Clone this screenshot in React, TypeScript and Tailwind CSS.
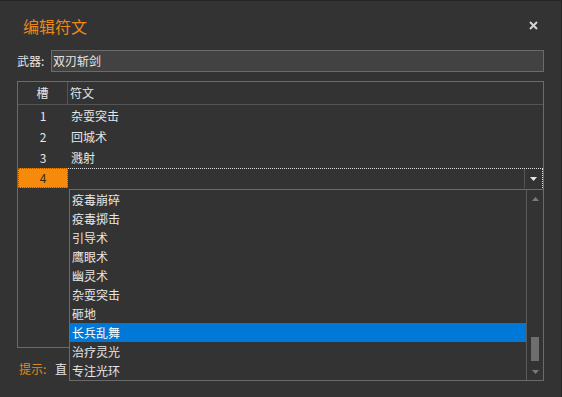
export default function App() {
    const rows = [
        { slot: '1', rune: '杂耍突击' },
        { slot: '2', rune: '回城术' },
        { slot: '3', rune: '溅射' },
    ];
    const options = ['疫毒崩碎', '疫毒掷击', '引导术', '鹰眼术', '幽灵术', '杂耍突击', '砸地', '长兵乱舞', '治疗灵光', '专注光环'];
    const selected = '长兵乱舞';

    return (
        <div
            className="relative w-[562px] h-[397px] overflow-hidden bg-[#333333] border-t border-r border-[#262626] text-[12px] text-[#e6e6e6]"
            style={{ fontFamily: '"Noto Sans CJK SC", "Noto Sans", sans-serif' }}
        >
            {/* title bar */}
            <div className="flex items-center justify-between h-[49px] pl-[23px] pr-[22px]">
                <span className="text-[16px] text-[#e8891c]">编辑符文</span>
                <svg width="9" height="9" viewBox="0 0 9 9" className="mr-[1px]">
                    <path d="M1 1L8 8M8 1L1 8" stroke="#d4d4d4" strokeWidth="2" />
                </svg>
            </div>

            {/* weapon */}
            <div className="flex items-center h-[22px] pl-[17px] pr-[17px]">
                <span className="w-[34px]">武器:</span>
                <div className="flex-1 h-[22px] flex items-center px-[1px] bg-[#424242] border border-[#6b6b6b]">
                    双刃斩剑
                </div>
            </div>

            {/* grid */}
            <div className="ml-[17px] mr-[17px] mt-[9px] h-[267px] border border-[#6b6b6b] flex flex-col">
                <div className="flex h-[23px] border-b border-[#555555]">
                    <div className="w-[50px] flex items-center justify-center border-r border-[#555555]">槽</div>
                    <div className="flex-1 flex items-center pl-[2px]">符文</div>
                </div>
                {rows.map((r) => (
                    <div key={r.slot} className="flex h-[21px]">
                        <div className="w-[50px] flex items-center justify-center">{r.slot}</div>
                        <div className="flex-1 flex items-center pl-[3px]">{r.rune}</div>
                    </div>
                ))}
                <div className="flex h-[20px]">
                    <div className="w-[50px] flex items-center justify-center bg-[#f58a0c] text-[#3a2a10] border border-dotted border-[#8a5a20]">4</div>
                    <div className="flex-1 flex border-t border-r border-dotted border-[#e0e0e0]">
                        <div className="flex-1" />
                        <div className="w-[18px] flex items-center justify-center border-l border-[#555555]">
                            <svg width="7" height="4" viewBox="0 0 7 4">
                                <path d="M0 0h7L3.5 4z" fill="#e8e8e8" />
                            </svg>
                        </div>
                    </div>
                </div>
            </div>

            {/* hint, the rest lies under the open list */}
            <div className="flex items-center mt-[12px] pl-[19px]">
                <span className="text-[#e0891e] w-[36px]">提示:</span>
                <span>直</span>
            </div>

            {/* dropdown list */}
            <div className="absolute left-[69px] top-[188px] w-[475px] h-[192px] bg-[#333333] border border-[#6b6b6b] flex">
                <div className="flex-1 flex flex-col">
                    {options.map((o) => (
                        <div
                            key={o}
                            className={`h-[19px] flex items-center pl-[2px] ${o === selected ? 'bg-[#0078d7] text-white' : ''}`}
                        >
                            {o}
                        </div>
                    ))}
                </div>
                <div className="w-[17px] border-l border-[#5a5a5a] flex flex-col items-center">
                    <div className="h-[17px] flex items-center justify-center">
                        <svg width="7" height="4" viewBox="0 0 7 4">
                            <path d="M3.5 0L7 4H0z" fill="#7a7a7a" />
                        </svg>
                    </div>
                    <div className="flex-1 w-full flex flex-col justify-end items-center pb-[2px]">
                        <div className="w-[8px] h-[24px] bg-[#6e6e6e]" />
                    </div>
                    <div className="h-[17px] flex items-center justify-center">
                        <svg width="7" height="4" viewBox="0 0 7 4">
                            <path d="M0 0h7L3.5 4z" fill="#7a7a7a" />
                        </svg>
                    </div>
                </div>
            </div>
        </div>
    );
}
